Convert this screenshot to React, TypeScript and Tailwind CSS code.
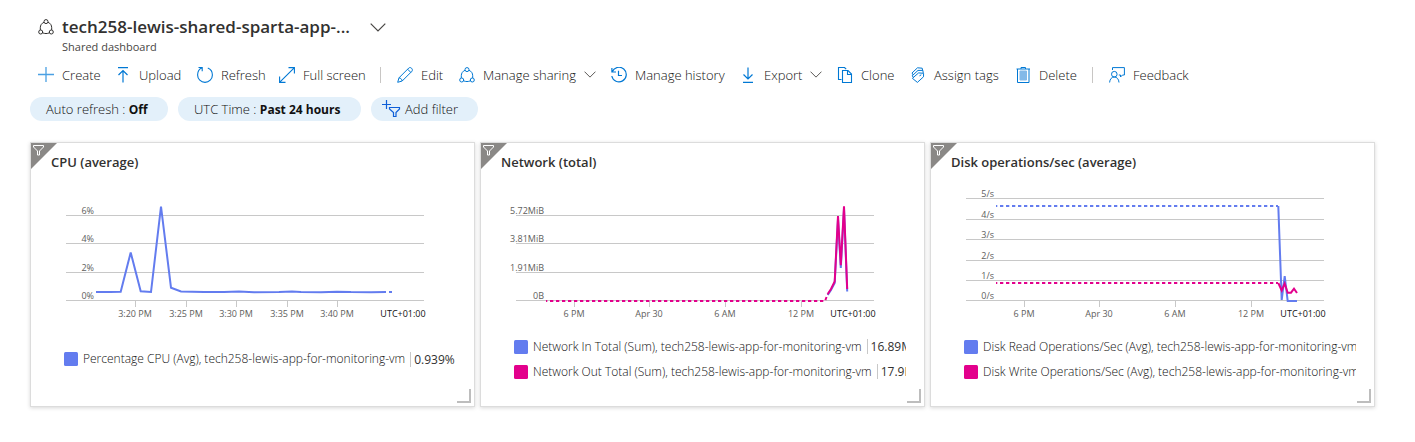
import type { ReactNode } from "react";

type Point = [number, number];

interface Series {
  name: string;
  value?: string;
  color: string;
  dashed?: Point[];
  solid: Point[];
}

interface Tile {
  title: string;
  grid: { y: number; label: string }[];
  ticks: { x: number; label: string }[];
  series: Series[];
}

const BLUE = "#637cef";
const PINK = "#e3008c";
const VM = "tech258-lewis-app-for-monitoring-vm";

const dayTicks = [
  { x: 93, label: "6 PM" },
  { x: 168, label: "Apr 30" },
  { x: 244, label: "6 AM" },
  { x: 320, label: "12 PM" },
];

const tiles: Tile[] = [
  {
    title: "CPU (average)",
    grid: [
      { y: 32, label: "6%" },
      { y: 60, label: "4%" },
      { y: 89, label: "2%" },
      { y: 117, label: "0%" },
    ],
    ticks: [
      { x: 104, label: "3:20 PM" },
      { x: 155, label: "3:25 PM" },
      { x: 205, label: "3:30 PM" },
      { x: 256, label: "3:35 PM" },
      { x: 306, label: "3:40 PM" },
    ],
    series: [
      {
        name: `Percentage CPU (Avg), ${VM}`,
        value: "0.939%",
        color: BLUE,
        dashed: [[358, 109], [361, 109]],
        solid: [
          [65, 109], [79, 109], [89.7, 108.7], [99.7, 69.5], [109.7, 108.3], [120, 109],
          [130, 23.5], [140, 104.7], [150, 108.5], [173, 109], [193, 109], [208, 108.6],
          [223, 109.2], [248, 109], [261, 108.4], [270, 109], [290, 109.2], [306, 108.7],
          [320, 109.1], [340, 109.2], [355, 109],
        ],
      },
    ],
  },
  {
    title: "Network (total)",
    grid: [
      { y: 32, label: "5.72MiB" },
      { y: 60, label: "3.81MiB" },
      { y: 89, label: "1.91MiB" },
      { y: 117, label: "0B" },
    ],
    ticks: dayTicks,
    series: [
      {
        name: `Network In Total (Sum), ${VM}`,
        value: "16.89MiB",
        color: BLUE,
        solid: [[346.7, 112], [350, 107], [353.7, 100], [357, 36], [359.8, 85], [363, 26], [366.2, 108.5]],
      },
      {
        name: `Network Out Total (Sum), ${VM}`,
        value: "17.9MiB",
        color: PINK,
        dashed: [[65, 118], [344, 118], [346.7, 111]],
        solid: [[346.7, 111], [350, 106], [353.7, 98.5], [357, 33], [359.8, 82.3], [363, 23.3], [366.2, 106]],
      },
    ],
  },
  {
    title: "Disk operations/sec (average)",
    grid: [
      { y: 15, label: "5/s" },
      { y: 36, label: "4/s" },
      { y: 56, label: "3/s" },
      { y: 77, label: "2/s" },
      { y: 97, label: "1/s" },
      { y: 117, label: "0/s" },
    ],
    ticks: dayTicks,
    series: [
      {
        name: `Disk Read Operations/Sec (Avg), ${VM}`,
        color: BLUE,
        dashed: [[65, 23], [347, 23]],
        solid: [[347.3, 23], [350.7, 117], [353.7, 93], [356.7, 118], [366, 118]],
      },
      {
        name: `Disk Write Operations/Sec (Avg), ${VM}`,
        color: PINK,
        dashed: [[65, 100], [347, 100]],
        solid: [[347.3, 100], [350.7, 107.5], [353.7, 100.5], [356.7, 109.7], [360, 109.7], [363, 105.7], [366, 110]],
      },
    ],
  },
];

const toPoints = (points: Point[]) => points.map((p) => p.join(",")).join(" ");

function Chart({ tile }: { tile: Tile }) {
  return (
    <svg viewBox="0 0 443 141" className="block h-auto w-full" role="img" aria-label={tile.title}>
      {tile.grid.map((g) => (
        <g key={g.label}>
          <path d={`M35 ${g.y + 0.5}H393`} stroke="#c8c8c8" />
          <text x="63" y={g.y - 1} textAnchor="end" fontSize="9" fill="#605e5c">
            {g.label}
          </text>
        </g>
      ))}
      {tile.ticks.map((t) => (
        <g key={t.label}>
          <path d={`M${t.x + 0.5} 118V124`} stroke="#c8c8c8" />
          <text x={t.x} y="134" textAnchor="middle" fontSize="9" fill="#605e5c">
            {t.label}
          </text>
        </g>
      ))}
      <text x="372" y="134" textAnchor="middle" fontSize="9" fill="#111111">
        UTC+01:00
      </text>
      {tile.series.map((s) => (
        <g key={s.name} fill="none" stroke={s.color} strokeWidth="2">
          {s.dashed && (
            <polyline
              points={toPoints(s.dashed)}
              strokeDasharray="3.3 2.7"
              strokeDashoffset={tile.ticks === dayTicks ? 2 : 0}
            />
          )}
          <polyline points={toPoints(s.solid)} />
        </g>
      ))}
    </svg>
  );
}

function Card({ tile }: { tile: Tile }) {
  return (
    <section className="relative min-w-0 border border-[#dcdcdc] bg-white pb-3 shadow-[0_1px_4px_rgba(0,0,0,0.16)]">
      <svg viewBox="0 0 26 26" className="absolute top-0 left-0 size-[26px]" fill="none" aria-hidden="true">
        <path d="M0 0H26L0 26Z" fill="#8a8886" />
        <path d="M2.5 2.5H12.5V4L8.5 8V12H6.5V8L2.5 4Z" stroke="#fff" />
      </svg>
      <h2 className="h-10 truncate px-5 text-[13px] leading-[38px] font-semibold text-[#323130]">{tile.title}</h2>
      <Chart tile={tile} />
      <ul className="mr-[18px] ml-[33px] flex h-[70px] flex-col justify-center overflow-hidden">
        {tile.series.map((s) => (
          <li key={s.name} className="flex h-[25px] items-center text-xs whitespace-nowrap text-[#111111]">
            <svg viewBox="0 0 14 14" className="mr-[5px] size-[14px] shrink-0" aria-hidden="true">
              <rect width="14" height="14" rx="1.5" fill={s.color} />
            </svg>
            <span className="font-light">{s.name}</span>
            {s.value && (
              <span className="ml-[5px] border-l border-[#c8c8c8] pl-[3px] leading-[15px] text-[#323130]">{s.value}</span>
            )}
          </li>
        ))}
      </ul>
      <svg viewBox="0 0 14 14" className="absolute right-[3px] bottom-[3px] size-[14px]" fill="none" aria-hidden="true">
        <path d="M13 0V13H0" stroke="#bdbdbd" strokeWidth="2" />
      </svg>
    </section>
  );
}

const shareShape = (
  <>
    <circle cx="8" cy="2.6" r="2" />
    <circle cx="2.7" cy="13" r="2" />
    <circle cx="13.3" cy="13" r="2" />
    <path d="M6 3.3C3.6 4.2 2.3 6.3 2.3 8.7V11M10 3.3C12.4 4.2 13.7 6.3 13.7 8.7V11M4.6 13.8C6.8 14.8 9.2 14.8 11.4 13.8" />
  </>
);

interface Action {
  label: string;
  width: string;
  icon: ReactNode;
  menu?: boolean;
  divider?: boolean;
}

const actions: Action[] = [
  { label: "Create", width: "w-[61px]", icon: <path d="M8 0V15M0 7.5H16" stroke="#4aa0e3" strokeWidth="1.3" /> },
  { label: "Upload", width: "w-[66px]", icon: <path d="M3 .6H13M8 15.5V3.5M3.5 8L8 3.5L12.5 8" strokeWidth="1.2" /> },
  {
    label: "Refresh",
    width: "w-[66px]",
    icon: <path d="M1.5 .5H5.2V4.2M5 .8C2.3 2 .6 4.8 .6 8A7.4 7.4 0 0 0 15.4 8C15.4 4.8 13.5 2 10.8 1" strokeWidth="1.1" />,
  },
  {
    label: "Full screen",
    width: "w-[85px]",
    icon: <path d="M.8 15.2L15.2 .8M9.5 .6H15.4V6.5M.6 9.5V15.4H6.5" strokeWidth="1.1" />,
  },
  {
    label: "Edit",
    width: "w-[46px]",
    divider: true,
    icon: <path d="M.7 15.3L2 10.8L11.8 1C13.6 -.5 16.4 2.2 15 4.2L5.2 14ZM10.6 2.2L13.8 5.4M2 10.8C3.7 11 5 12.3 5.2 14" />,
  },
  { label: "Manage sharing", width: "w-[136px]", menu: true, icon: shareShape },
  {
    label: "Manage history",
    width: "w-[113px]",
    icon: <path d="M.9 1V5H5M1.2 4.8A7.3 7.3 0 1 1 .8 9M7.5 3.8V8.5H11" strokeWidth="1.2" />,
  },
  {
    label: "Export",
    width: "w-[81px]",
    menu: true,
    icon: <path d="M3 15.4H13M8 .5V12M3.5 7.5L8 12L12.5 7.5" strokeWidth="1.2" />,
  },
  {
    label: "Clone",
    width: "w-[57px]",
    icon: <path d="M4.5 12.5H1.5V.5H7.5L9.2 2.2M5.5 3.5H11L14.5 7V15.5H5.5ZM10.5 3.8V7.5H14.2" strokeWidth="1.1" />,
  },
  {
    label: "Assign tags",
    width: "w-[89px]",
    icon: (
      <>
        <path d="M3.2 8L2 6L7.5 .8L12.2 1.2L12.6 3.4" />
        <path d="M3.6 10.6L2.2 8.8L8 3.4L12.9 3.4L13.2 6" />
        <path d="M2.4 11.3L8.6 5.9L13.6 6.3L13.5 9.8L7.4 15.4Z" />
        <path d="M9.5 8.8L11.3 7.8" />
      </>
    ),
  },
  {
    label: "Delete",
    width: "w-[61px]",
    icon: (
      <>
        <path d="M5 4H11.5V13H5Z" fill="#83b9e8" stroke="#83b9e8" />
        <path d="M1.5 2H15M6 2V.5H10.5V2M2.5 2V15.5H14V2" />
      </>
    ),
  },
  {
    label: "Feedback",
    width: "w-[79px]",
    divider: true,
    icon: (
      <>
        <circle cx="5.3" cy="7.2" r="2.8" />
        <path d="M.6 15.5C.8 12 2.8 10 5.3 10S9.8 12 10 15.5M3.5 3V.6H15.4V8H13.5L11.5 10V8H9.8" />
      </>
    ),
  },
];

function Chevron({ className }: { className: string }) {
  return (
    <svg viewBox="0 0 16 9" className={className} fill="none" stroke="#484644" strokeWidth="1.2" aria-hidden="true">
      <path d="M.7 .7L8 8L15.3 .7" />
    </svg>
  );
}

function ActionButton({ action }: { action: Action }) {
  return (
    <>
      {action.divider && <span className="h-4 w-px bg-[#c8c6c4]" />}
      <button type="button" className={`flex items-center gap-2 whitespace-nowrap ${action.width}`}>
        <svg viewBox="0 0 16 16" className="size-4 shrink-0" fill="none" stroke="#0078d4" aria-hidden="true">
          {action.icon}
        </svg>
        <span className="pt-0.5">{action.label}</span>
        {action.menu && <Chevron className="ml-auto h-[7px] w-3 shrink-0" />}
      </button>
    </>
  );
}

export default function App() {
  return (
    <main className="bg-white pt-[15px] pr-10 pb-9 pl-[30px] font-['Open_Sans','Noto_Sans',sans-serif] text-[#323130]">
      <header className="pl-2">
        <div className="flex h-6 items-center">
          <svg viewBox="0 0 16 16" className="mr-2 size-4 shrink-0" fill="none" stroke="#323130" aria-hidden="true">
            {shareShape}
          </svg>
          <h1 className="w-[300px] text-[17px] leading-6 font-semibold whitespace-nowrap">
            tech258-lewis-shared-sparta-app-...
          </h1>
          <button type="button" aria-label="Switch dashboard" className="ml-2">
            <Chevron className="block h-[9px] w-4" />
          </button>
        </div>
        <p className="pl-6 text-[11px] leading-4 text-[#484644]">Shared dashboard</p>
      </header>

      <nav
        aria-label="Dashboard actions"
        className="mt-1 flex min-h-[31px] flex-wrap items-center gap-x-4 pl-2 text-[13px] font-light text-[#111111]"
      >
        {actions.map((action) => (
          <ActionButton key={action.label} action={action} />
        ))}
      </nav>

      <div className="mt-[7px] flex flex-wrap gap-2.5 text-[13px] leading-6 font-light text-[#111111]">
        <button type="button" className="h-6 w-[138px] rounded-full bg-[#e3f0fa] pl-4 text-left whitespace-nowrap">
          Auto refresh : <b className="text-xs font-bold">Off</b>
        </button>
        <button type="button" className="h-6 w-[183px] rounded-full bg-[#e3f0fa] pl-4 text-left whitespace-nowrap">
          UTC Time : <b className="text-xs font-bold">Past 24 hours</b>
        </button>
        <button type="button" className="flex h-6 w-[107px] items-center gap-1 rounded-full bg-[#e3f0fa] pl-[11px] whitespace-nowrap">
          <svg viewBox="0 0 19 18" className="h-[18px] w-[19px] shrink-0" fill="none" stroke="#0f5fd8" strokeWidth="1.2" aria-hidden="true">
            <path d="M4.5 0V9M0 4.5H9M7.5 7.5H17.5V9L14 12.5V16.5H11.5V12.5L7.5 9Z" />
          </svg>
          Add filter
        </button>
      </div>

      <div className="mt-[21px] grid grid-cols-3 gap-[5px]">
        {tiles.map((tile) => (
          <Card key={tile.title} tile={tile} />
        ))}
      </div>
    </main>
  );
}
